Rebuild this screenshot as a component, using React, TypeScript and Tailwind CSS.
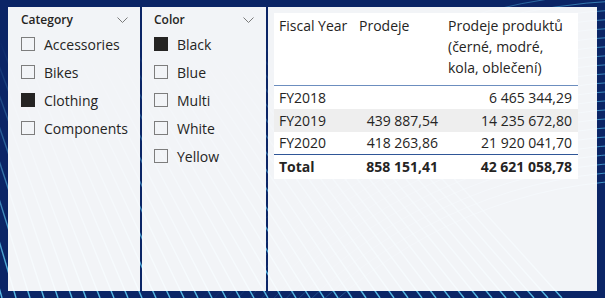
const CATEGORIES = [
  { label: 'Accessories', checked: false },
  { label: 'Bikes', checked: false },
  { label: 'Clothing', checked: true },
  { label: 'Components', checked: false },
];

const COLORS = [
  { label: 'Black', checked: true },
  { label: 'Blue', checked: false },
  { label: 'Multi', checked: false },
  { label: 'White', checked: false },
  { label: 'Yellow', checked: false },
];

const ROWS = [
  { year: 'FY2018', sales: '', product: '6 465 344,29' },
  { year: 'FY2019', sales: '439 887,54', product: '14 235 672,80' },
  { year: 'FY2020', sales: '418 263,86', product: '21 920 041,70' },
];

function Backdrop() {
  const fan = Array.from({ length: 44 }).map((_, i) => -40 + i * 14);
  const arcs = Array.from({ length: 22 }).map((_, i) => 470 + i * 9);

  return (
    <svg className="absolute inset-0" width="605" height="298" viewBox="0 0 605 298">
      <defs>
        <linearGradient id="fanFade" gradientUnits="userSpaceOnUse" x1="0" y1="298" x2="0" y2="40">
          <stop offset="0" stopColor="#5cc3ec" stopOpacity="0.95" />
          <stop offset="1" stopColor="#5cc3ec" stopOpacity="0" />
        </linearGradient>
        <linearGradient id="arcFade" gradientUnits="userSpaceOnUse" x1="605" y1="298" x2="250" y2="150">
          <stop offset="0" stopColor="#4fb0e0" stopOpacity="0.9" />
          <stop offset="1" stopColor="#4fb0e0" stopOpacity="0" />
        </linearGradient>
      </defs>
      <rect width="605" height="298" fill="#0b2566" />
      {fan.map(x => (
        <line key={x} x1={x} y1={298} x2={-250} y2={-600} stroke="url(#fanFade)" strokeWidth="1.4" />
      ))}
      {arcs.map(r => (
        <circle key={r} cx={650} cy={650} r={r} fill="none" stroke="url(#arcFade)" strokeWidth="1" />
      ))}
    </svg>
  );
}

function Chevron() {
  return (
    <svg width="11" height="6" viewBox="0 0 11 6" className="shrink-0">
      <polyline points="0.5,0.5 5.5,5.5 10.5,0.5" fill="none" stroke="#7a7a7a" strokeWidth="1" />
    </svg>
  );
}

function Slicer({ title, items, className }: { title: string; items: { label: string; checked: boolean }[]; className: string }) {
  return (
    <div className={`bg-white/95 pt-[5px] pr-3 ${className}`}>
      <div className="h-[16px] flex items-center justify-between">
        <span className="text-[12px] font-semibold text-[#252423]">{title}</span>
        <Chevron />
      </div>
      <div className="mt-[2px] flex flex-col">
        {items.map(item => (
          <div key={item.label} className="h-[28px] flex items-center gap-[9px]">
            <span
              className={`w-[14px] h-[14px] shrink-0 border ${
                item.checked ? 'bg-[#252423] border-[#252423]' : 'border-[#7d7d7d]'
              }`}
            />
            <span className="text-[14px] text-[#252423] whitespace-nowrap">{item.label}</span>
          </div>
        ))}
      </div>
    </div>
  );
}

export default function App() {
  return (
    <div className="relative w-[605px] h-[298px] overflow-hidden font-['Open_Sans',sans-serif]">
      <Backdrop />
      <div className="relative h-full flex gap-[2px] pl-2 pt-[7px] pb-[7px]">
        <Slicer title="Category" items={CATEGORIES} className="w-[132px] pl-[13px]" />
        <Slicer title="Color" items={COLORS} className="w-[124px] pl-3" />
        <div className="w-[329px] bg-white/95 pl-[6px] pt-[6px]">
          <table className="w-[304px] bg-white text-[14px] text-[#252423] border-collapse">
            <thead>
              <tr className="border-b border-[#6c8ebf] align-top leading-[21px]">
                <th className="w-[81px] pl-[5px] pt-[2px] pb-[7px] text-left font-normal whitespace-nowrap">Fiscal Year</th>
                <th className="w-[88px] pl-[4px] pt-[2px] pb-[7px] text-left font-normal">Prodeje</th>
                <th className="pl-[5px] pt-[2px] pb-[7px] text-left font-normal whitespace-nowrap">
                  Prodeje produktů
                  <br />
                  (černé, modré,
                  <br />
                  kola, oblečení)
                </th>
              </tr>
            </thead>
            <tbody>
              {ROWS.map((row, i) => (
                <tr
                  key={row.year}
                  className={`h-[23px] ${i === 1 ? 'bg-[#eeeeee]' : ''} ${i === 2 ? 'border-b border-[#2f5697]' : ''}`}
                >
                  <td className="pl-[5px]">{row.year}</td>
                  <td className="pr-[5px] text-right whitespace-nowrap">{row.sales}</td>
                  <td className="pr-[6px] text-right whitespace-nowrap">{row.product}</td>
                </tr>
              ))}
              <tr className="h-[24px] font-bold">
                <td className="pl-[5px]">Total</td>
                <td className="pr-[5px] text-right whitespace-nowrap">858 151,41</td>
                <td className="pr-[6px] text-right whitespace-nowrap">42 621 058,78</td>
              </tr>
            </tbody>
          </table>
        </div>
      </div>
    </div>
  );
}
